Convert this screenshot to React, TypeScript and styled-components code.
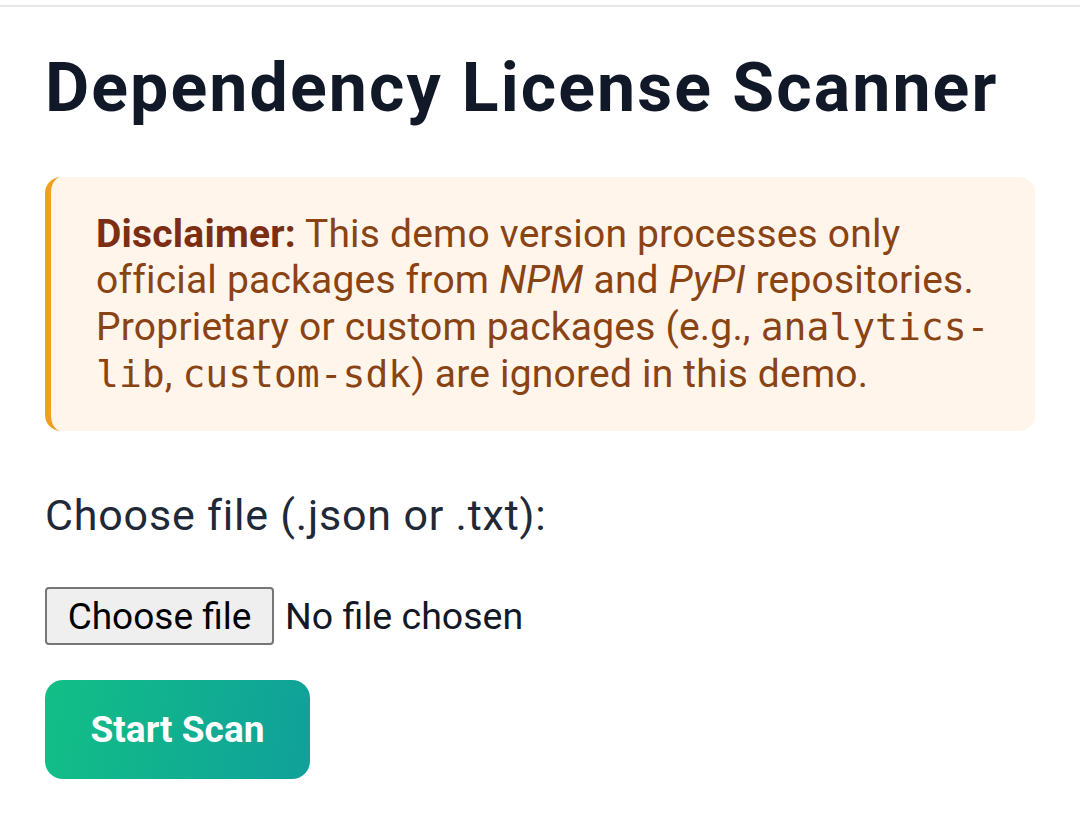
import React from "react";
import styled, { createGlobalStyle } from "styled-components";

const Global = createGlobalStyle`
  html, body { margin: 0; padding: 0; background: #ffffff; }
  body { font-family: Roboto, "Noto Sans", Arial, sans-serif; }
`;

const TopRule = styled.div`
  height: 5px;
  border-bottom: 2px solid #e5e7eb;
`;

const Page = styled.main`
  padding: 0 45px;
  display: flex;
  flex-direction: column;
`;

const Title = styled.h1`
  margin: 41px 0 0;
  font-size: 68px;
  font-weight: 700;
  line-height: 1.2;
  color: #111827;
  letter-spacing: 2.1px;
  white-space: nowrap;
`;

const Notice = styled.div`
  margin-top: 47px;
  background: #fff5eb;
  border-left: 6px solid #f0a020;
  border-radius: 16px;
  padding: 34px 40px 34px 45px;
  font-size: 39px;
  line-height: 46.7px;
  letter-spacing: 0.2px;
  color: #8a4313;
`;

const Strong = styled.strong`
  color: #7c2d12;
  font-weight: 700;
`;

const Code = styled.code`
  font-family: "DejaVu Sans Mono", "Liberation Mono", monospace;
  font-size: 38px;
  letter-spacing: 0;
`;

const Label = styled.label`
  margin-top: 57px;
  font-size: 43px;
  letter-spacing: 0.8px;
  color: #1f2937;
  line-height: 1.3;
`;

const FileRow = styled.div`
  margin-top: 43px;
  display: flex;
  align-items: center;
  gap: 11px;
`;

const FileButton = styled.button`
  font-family: Roboto, sans-serif;
  font-size: 37px;
  color: #000;
  background: #efefef;
  border: 2px solid #767676;
  border-radius: 4px;
  height: 58px;
  width: 229px;
  padding: 0;
`;

const FileStatus = styled.span`
  font-size: 37.5px;
  color: #111827;
`;

const ScanButton = styled.button`
  margin-top: 35px;
  align-self: flex-start;
  width: 265px;
  height: 99px;
  border: none;
  border-radius: 18px;
  background: linear-gradient(100deg, #12bf85, #10a09a);
  color: #ffffff;
  font-family: Roboto, sans-serif;
  font-size: 37px;
  font-weight: 700;
`;

export default function App() {
  return (
    <>
      <Global />
      <TopRule />
      <Page>
        <Title>Dependency License Scanner</Title>
        <Notice>
          <Strong>Disclaimer:</Strong> This demo version processes only official
          packages from <em>NPM</em> and <em>PyPI</em> repositories. Proprietary or
          custom packages (e.g., <Code>analytics-lib</Code>, <Code>custom-sdk</Code>)
          are ignored in this demo.
        </Notice>
        <Label>Choose file (.json or .txt):</Label>
        <FileRow>
          <FileButton>Choose file</FileButton>
          <FileStatus>No file chosen</FileStatus>
        </FileRow>
        <ScanButton>Start Scan</ScanButton>
      </Page>
    </>
  );
}
